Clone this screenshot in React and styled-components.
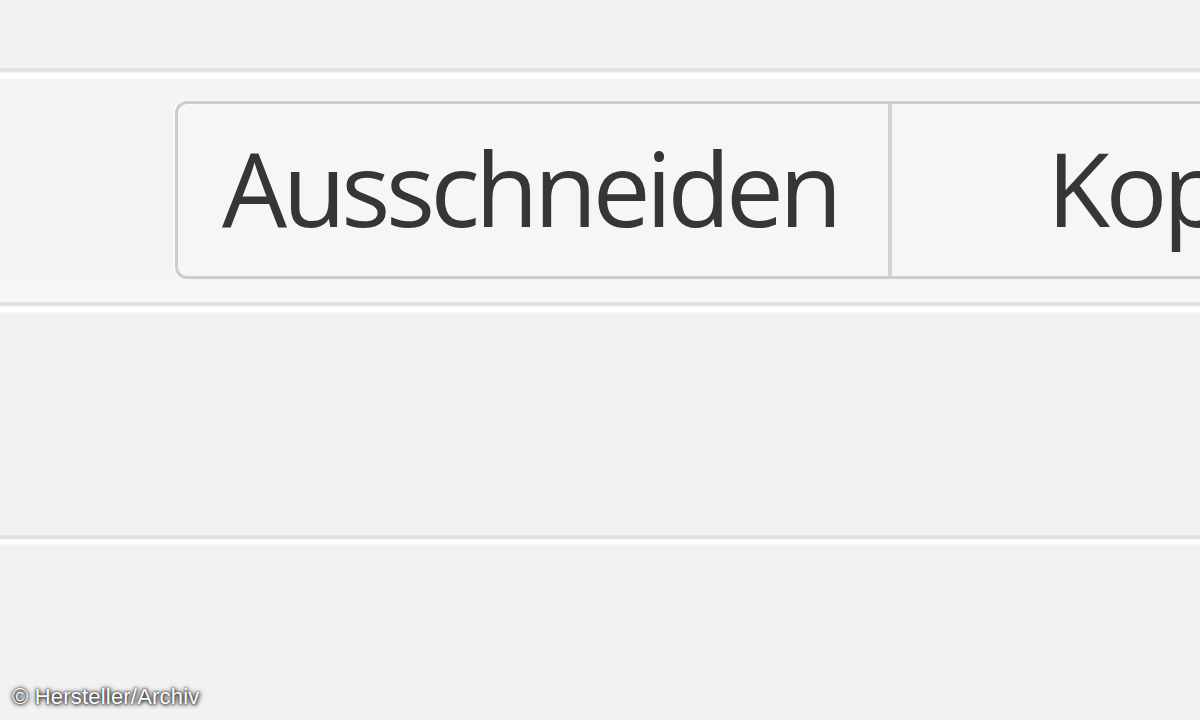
import styled, { createGlobalStyle } from "styled-components";

const GlobalStyle = createGlobalStyle`
  html, body {
    margin: 0;
    padding: 0;
    background: #f2f2f2;
  }
  body {
    font-family: "Open Sans", "DejaVu Sans", sans-serif;
  }
`;

const Page = styled.div`
  position: relative;
  width: 1200px;
  height: 720px;
  overflow: hidden;
  display: flex;
  flex-direction: column;
  background: #f2f2f2;
`;

const TopArea = styled.div`
  height: 68px;
  flex-shrink: 0;
`;

// grey line with a white highlight under it
const Separator = styled.div`
  flex-shrink: 0;
  height: ${(p) => p.$white + 4}px;
  background: linear-gradient(
    to bottom,
    #e6e6e6 0,
    #dedede 2px,
    #e6e6e6 4px,
    #ffffff 5px,
    #ffffff calc(100% - 2px),
    #f6f6f6 100%
  );
`;

const Ribbon = styled.div`
  height: 222px;
  flex-shrink: 0;
  display: flex;
  align-items: flex-start;
  padding: 21px 0 0 175px;
  box-sizing: border-box;
  background: linear-gradient(to bottom, #f4f4f4 0, #f3f3f3 180px, #f8f8f8 100%);
`;

const ButtonGroup = styled.div`
  display: flex;
  height: 178px;
  flex: 1;
  border: 3px solid #cdcdcd;
  border-right: none;
  border-radius: 12px 0 0 12px;
  background: #f6f6f6;
  box-shadow: -1px -1px 2px rgba(255, 255, 255, 0.9);
  box-sizing: border-box;
`;

const Segment = styled.button`
  all: unset;
  box-sizing: border-box;
  display: flex;
  align-items: center;
  width: ${(p) => (p.$width ? `${p.$width}px` : "auto")};
  flex: ${(p) => (p.$width ? "none" : "1")};
  padding-left: ${(p) => p.$pad}px;
  padding-bottom: 6px;
  border-right: ${(p) => (p.$divider ? "4px solid #d3d3d3" : "none")};
  color: #363636;
  font-family: "Open Sans", "DejaVu Sans", sans-serif;
  font-size: 103px;
  font-weight: 500;
  letter-spacing: -4.5px;
  white-space: nowrap;
  overflow: hidden;
  cursor: pointer;
`;

const Panel = styled.div`
  height: 222px;
  flex-shrink: 0;
`;

const Bottom = styled.div`
  flex: 1;
`;

const Watermark = styled.div`
  position: absolute;
  left: 12px;
  bottom: 10px;
  color: #ffffff;
  font-family: "Liberation Sans", Arial, sans-serif;
  font-size: 22px;
  letter-spacing: 0.2px;
  text-shadow: 0 0 2px #222, 0 0 5px #444, 1px 1px 4px #333;
`;

export default function App() {
  return (
    <>
      <GlobalStyle />
      <Page>
        <TopArea />
        <Separator $white={8} />
        <Ribbon>
          <ButtonGroup>
            <Segment $width={714} $pad={44} $divider>
              Ausschneiden
            </Segment>
            <Segment $pad={155}>Kopieren</Segment>
          </ButtonGroup>
        </Ribbon>
        <Separator $white={7} />
        <Panel />
        <Separator $white={6} />
        <Bottom />
        <Watermark>© Hersteller/Archiv</Watermark>
      </Page>
    </>
  );
}
